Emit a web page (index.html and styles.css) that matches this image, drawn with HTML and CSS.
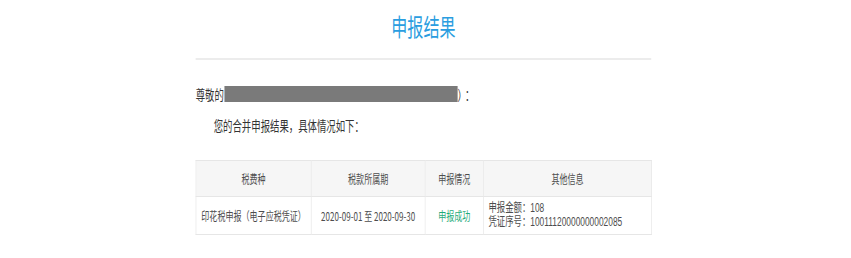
FILE: index.html
```html
<!DOCTYPE html>
<html lang="zh-CN">
<head>
<meta charset="utf-8">
<title>申报结果</title>
<link rel="stylesheet" href="styles.css">
</head>
<body>
<div class="viewport">
  <div class="page">
    <div class="result">
      <h1 class="result-title">申报结果</h1>
      <p class="greeting">尊敬的<span class="masked"></span><span class="tail">）：</span></p>
      <p class="intro">您的合并申报结果，具体情况如下：</p>
      <table class="result-table">
        <colgroup>
          <col class="col-kind">
          <col class="col-period">
          <col class="col-status">
          <col class="col-info">
        </colgroup>
        <thead>
          <tr>
            <th>税费种</th>
            <th>税款所属期</th>
            <th>申报情况</th>
            <th>其他信息</th>
          </tr>
        </thead>
        <tbody>
          <tr>
            <td>印花税申报（电子应税凭证）</td>
            <td>2020-09-01 至 2020-09-30</td>
            <td class="status-ok">申报成功</td>
            <td class="info">
              <div class="info-line">申报金额：108</div>
              <div class="info-line">凭证序号：10011120000000002085</div>
            </td>
          </tr>
        </tbody>
      </table>
    </div>
  </div>
</div>
</body>
</html>
```
FILE: styles.css
```css
html, body {
  margin: 0;
  padding: 0;
  background: #ffffff;
}

.viewport {
  width: 100%;
  overflow: hidden;
}

/* the page is laid out wide and rendered with a narrow glyph aspect */
.page {
  width: 1264px;
  transform: scaleX(0.67);
  transform-origin: 0 0;
  font-family: "Noto Sans CJK SC", "Noto Sans", sans-serif;
  color: #333333;
}

.result {
  width: 680px;
  margin: 0 auto;
}

.result-title {
  margin: 0;
  padding-top: 8px;
  height: 36px;
  line-height: 36px;
  font-size: 24px;
  font-weight: normal;
  text-align: center;
  color: #2a9de0;
  border-bottom: 2px solid #ececec;
  padding-bottom: 14px;
}

.greeting {
  margin: 22px 0 0;
  font-size: 14px;
  line-height: 24px;
  display: flex;
  align-items: center;
}

.masked {
  display: inline-block;
  width: 348px;
  height: 16px;
  background: #7a7a7a;
  margin-left: 1px;
}

.tail {
  letter-spacing: 4px;
}

.intro {
  margin: 7px 0 0;
  font-size: 14px;
  line-height: 24px;
  text-indent: 27px;
}

.result-table {
  margin-top: 23px;
  width: 680px;
  table-layout: fixed;
  border-collapse: collapse;
  font-size: 12px;
  color: #4d4d4d;
}

.col-kind { width: 172px; }
.col-period { width: 170px; }
.col-status { width: 87px; }
.col-info { width: 251px; }

.result-table th,
.result-table td {
  border: 1px solid #e6e6e6;
  text-align: center;
  white-space: nowrap;
}

.result-table th {
  height: 35px;
  padding: 0;
  font-weight: normal;
  background: #f6f6f6;
}

.result-table td {
  height: 30px;
  padding: 3px 0 4px;
  line-height: 15px;
}

.result-table td.status-ok {
  color: #1fab79;
}

.result-table td.info {
  text-align: left;
  padding-left: 7px;
  font-family: "Liberation Sans", "Noto Sans CJK SC", sans-serif;
  font-size: 12.5px;
}

.info-line {
  height: 14px;
  line-height: 14px;
}
```
